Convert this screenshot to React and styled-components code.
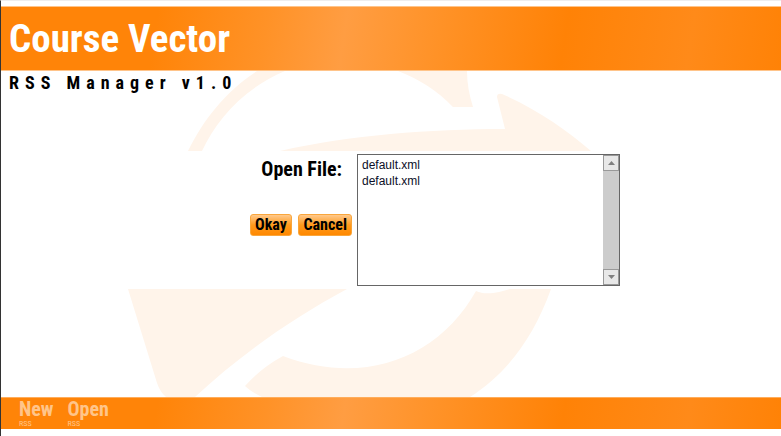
import React from "react";
import styled, { createGlobalStyle } from "styled-components";

const narrow = `"Liberation Sans Narrow", "Roboto Condensed", "Liberation Sans", sans-serif`;
const sheen = `linear-gradient(99deg, #ff8408 0%, #ff8408 20%, #ff9227 34%, #ff9d42 44%, #ff9227 56%, #ff8206 72%, #ff8a19 88%, #ff8206 100%)`;

const GlobalStyle = createGlobalStyle`
  * { box-sizing: border-box; }
  body { margin: 0; background: #fff; }
`;

const Page = styled.div`
  min-height: 100vh;
  display: flex;
  flex-direction: column;
  padding: 5px 0 7px;
  border-top: 1px solid #eee;
  border-left: 1px solid #333;
  font-family: ${narrow};
  color: #000;
`;

const Header = styled.header`
  height: 65px;
  display: flex;
  align-items: center;
  padding: 0 8px;
  background: ${sheen};
  border: solid #ffc48a;
  border-width: 1px 0;
`;

const Title = styled.h1`
  margin: 0;
  color: #fff;
  font-size: 39px;
  line-height: 48px;
  font-weight: bold;
  white-space: nowrap;
`;

const Main = styled.main`
  position: relative;
  flex: 1;
  display: flex;
  flex-direction: column;
`;

const Watermark = styled.svg`
  position: absolute;
  inset: 0;
  width: 100%;
  height: 100%;
  z-index: -1;
`;

const Tagline = styled.p`
  margin: 0;
  height: 80px;
  padding-left: 8px;
  font-size: 18px;
  line-height: 24px;
  font-weight: bold;
  letter-spacing: 6px;
  white-space: nowrap;
`;

const OpenForm = styled.form`
  display: flex;
  gap: 5px;
  padding: 3px 0 3px calc(50% - 141px);
  background: #fff;
`;

const Controls = styled.div`
  display: flex;
  flex-direction: column;
  gap: 30px;
  width: 102px;
`;

const Label = styled.label`
  padding-right: 10px;
  text-align: right;
  font-size: 20px;
  line-height: 30px;
  font-weight: bold;
  white-space: nowrap;
`;

const Actions = styled.div`
  display: flex;
  justify-content: space-between;
`;

const ActionButton = styled.button`
  height: 22px;
  padding: 0 4px;
  border: 1px solid #f9a63c;
  border-radius: 3px;
  background: linear-gradient(#ffc98c, #ff9a1c 50%, #ff8800);
  color: #000;
  font-family: ${narrow};
  font-size: 16px;
  line-height: 20px;
  font-weight: bold;
`;

const ListFrame = styled.div`
  display: flex;
  width: 263px;
  height: 132px;
  border: 1px solid #666;
  background: #fff;
`;

const FileSelect = styled.select`
  flex: 1;
  min-width: 0;
  padding: 3px 0 0;
  border: 0;
  outline: 0;
  overflow: hidden;
  background: #fff;
  color: #0b0f28;
  font-family: "Liberation Sans", Arial, sans-serif;
  font-size: 12px;

  option {
    min-height: 16px;
    padding: 0 4px;
    line-height: 16px;
  }
`;

const ScrollTrack = styled.div`
  display: flex;
  flex-direction: column;
  justify-content: space-between;
  width: 16px;
  background: #ccc;
`;

const ScrollButton = styled.button`
  display: flex;
  align-items: center;
  justify-content: center;
  width: 16px;
  height: 16px;
  padding: 0;
  border: 1px solid #999;
  background: #e8e8e8;
`;

const Footer = styled.footer`
  height: 32px;
  display: flex;
  align-items: flex-start;
  gap: 14px;
  padding-left: 18px;
  background: ${sheen};
  border-top: 1px solid #ffad5c;
`;

const NavButton = styled.button`
  display: flex;
  flex-direction: column;
  align-items: flex-start;
  padding: 0;
  border: 0;
  background: none;
  color: #ffc58a;
  font-family: ${narrow};
  font-size: 20px;
  line-height: 22px;
  font-weight: bold;
`;

const NavNote = styled.small`
  font-size: 8px;
  line-height: 8px;
  font-weight: normal;
`;

function Arrow({ down }) {
  return (
    <svg width="7" height="4" viewBox="0 0 7 4" aria-hidden="true">
      <path d={down ? "M0 0H7L3.5 4Z" : "M0 4H7L3.5 0Z"} fill="#808080" />
    </svg>
  );
}

function NavItem({ name }) {
  return (
    <NavButton type="button">
      {name}
      <NavNote>RSS</NavNote>
    </NavButton>
  );
}

export default function App() {
  return (
    <Page>
      <GlobalStyle />
      <Header>
        <Title>Course Vector</Title>
      </Header>
      <Main>
        <Watermark viewBox="1 71 780 326" preserveAspectRatio="xMidYMid meet" aria-hidden="true">
          <g fill="#fff4ea">
            <path d="M188 151C204 119 225 92 257 71H285C243 89 217 119 202 151Z" />
            <path d="M398 71C419 79 438 91 453 107H473Q467 88 467 71Z" />
            <path d="M280 151C350 135 430 129 505 129L497 97Q497 93 502 94C535 108 567 130 591 151Z" />
            <path d="M128 289L157 383Q160 392 166 397H195C239 356 291 319 347 289Z" />
            <path d="M476 291C486 296 500 292 510 289H551C533 339 506 374 470 397H262Q251 392 245 386Q261 368 283 356C365 387 439 357 476 291Z" />
          </g>
        </Watermark>
        <Tagline>RSS Manager v1.0</Tagline>
        <OpenForm onSubmit={(e) => e.preventDefault()}>
          <Controls>
            <Label htmlFor="file">Open File:</Label>
            <Actions>
              <ActionButton type="submit">Okay</ActionButton>
              <ActionButton type="button">Cancel</ActionButton>
            </Actions>
          </Controls>
          <ListFrame>
            <FileSelect id="file" size={8}>
              <option value="1">default.xml</option>
              <option value="2">default.xml</option>
            </FileSelect>
            <ScrollTrack>
              <ScrollButton type="button" aria-label="Scroll up">
                <Arrow />
              </ScrollButton>
              <ScrollButton type="button" aria-label="Scroll down">
                <Arrow down />
              </ScrollButton>
            </ScrollTrack>
          </ListFrame>
        </OpenForm>
      </Main>
      <Footer>
        <NavItem name="New" />
        <NavItem name="Open" />
      </Footer>
    </Page>
  );
}
